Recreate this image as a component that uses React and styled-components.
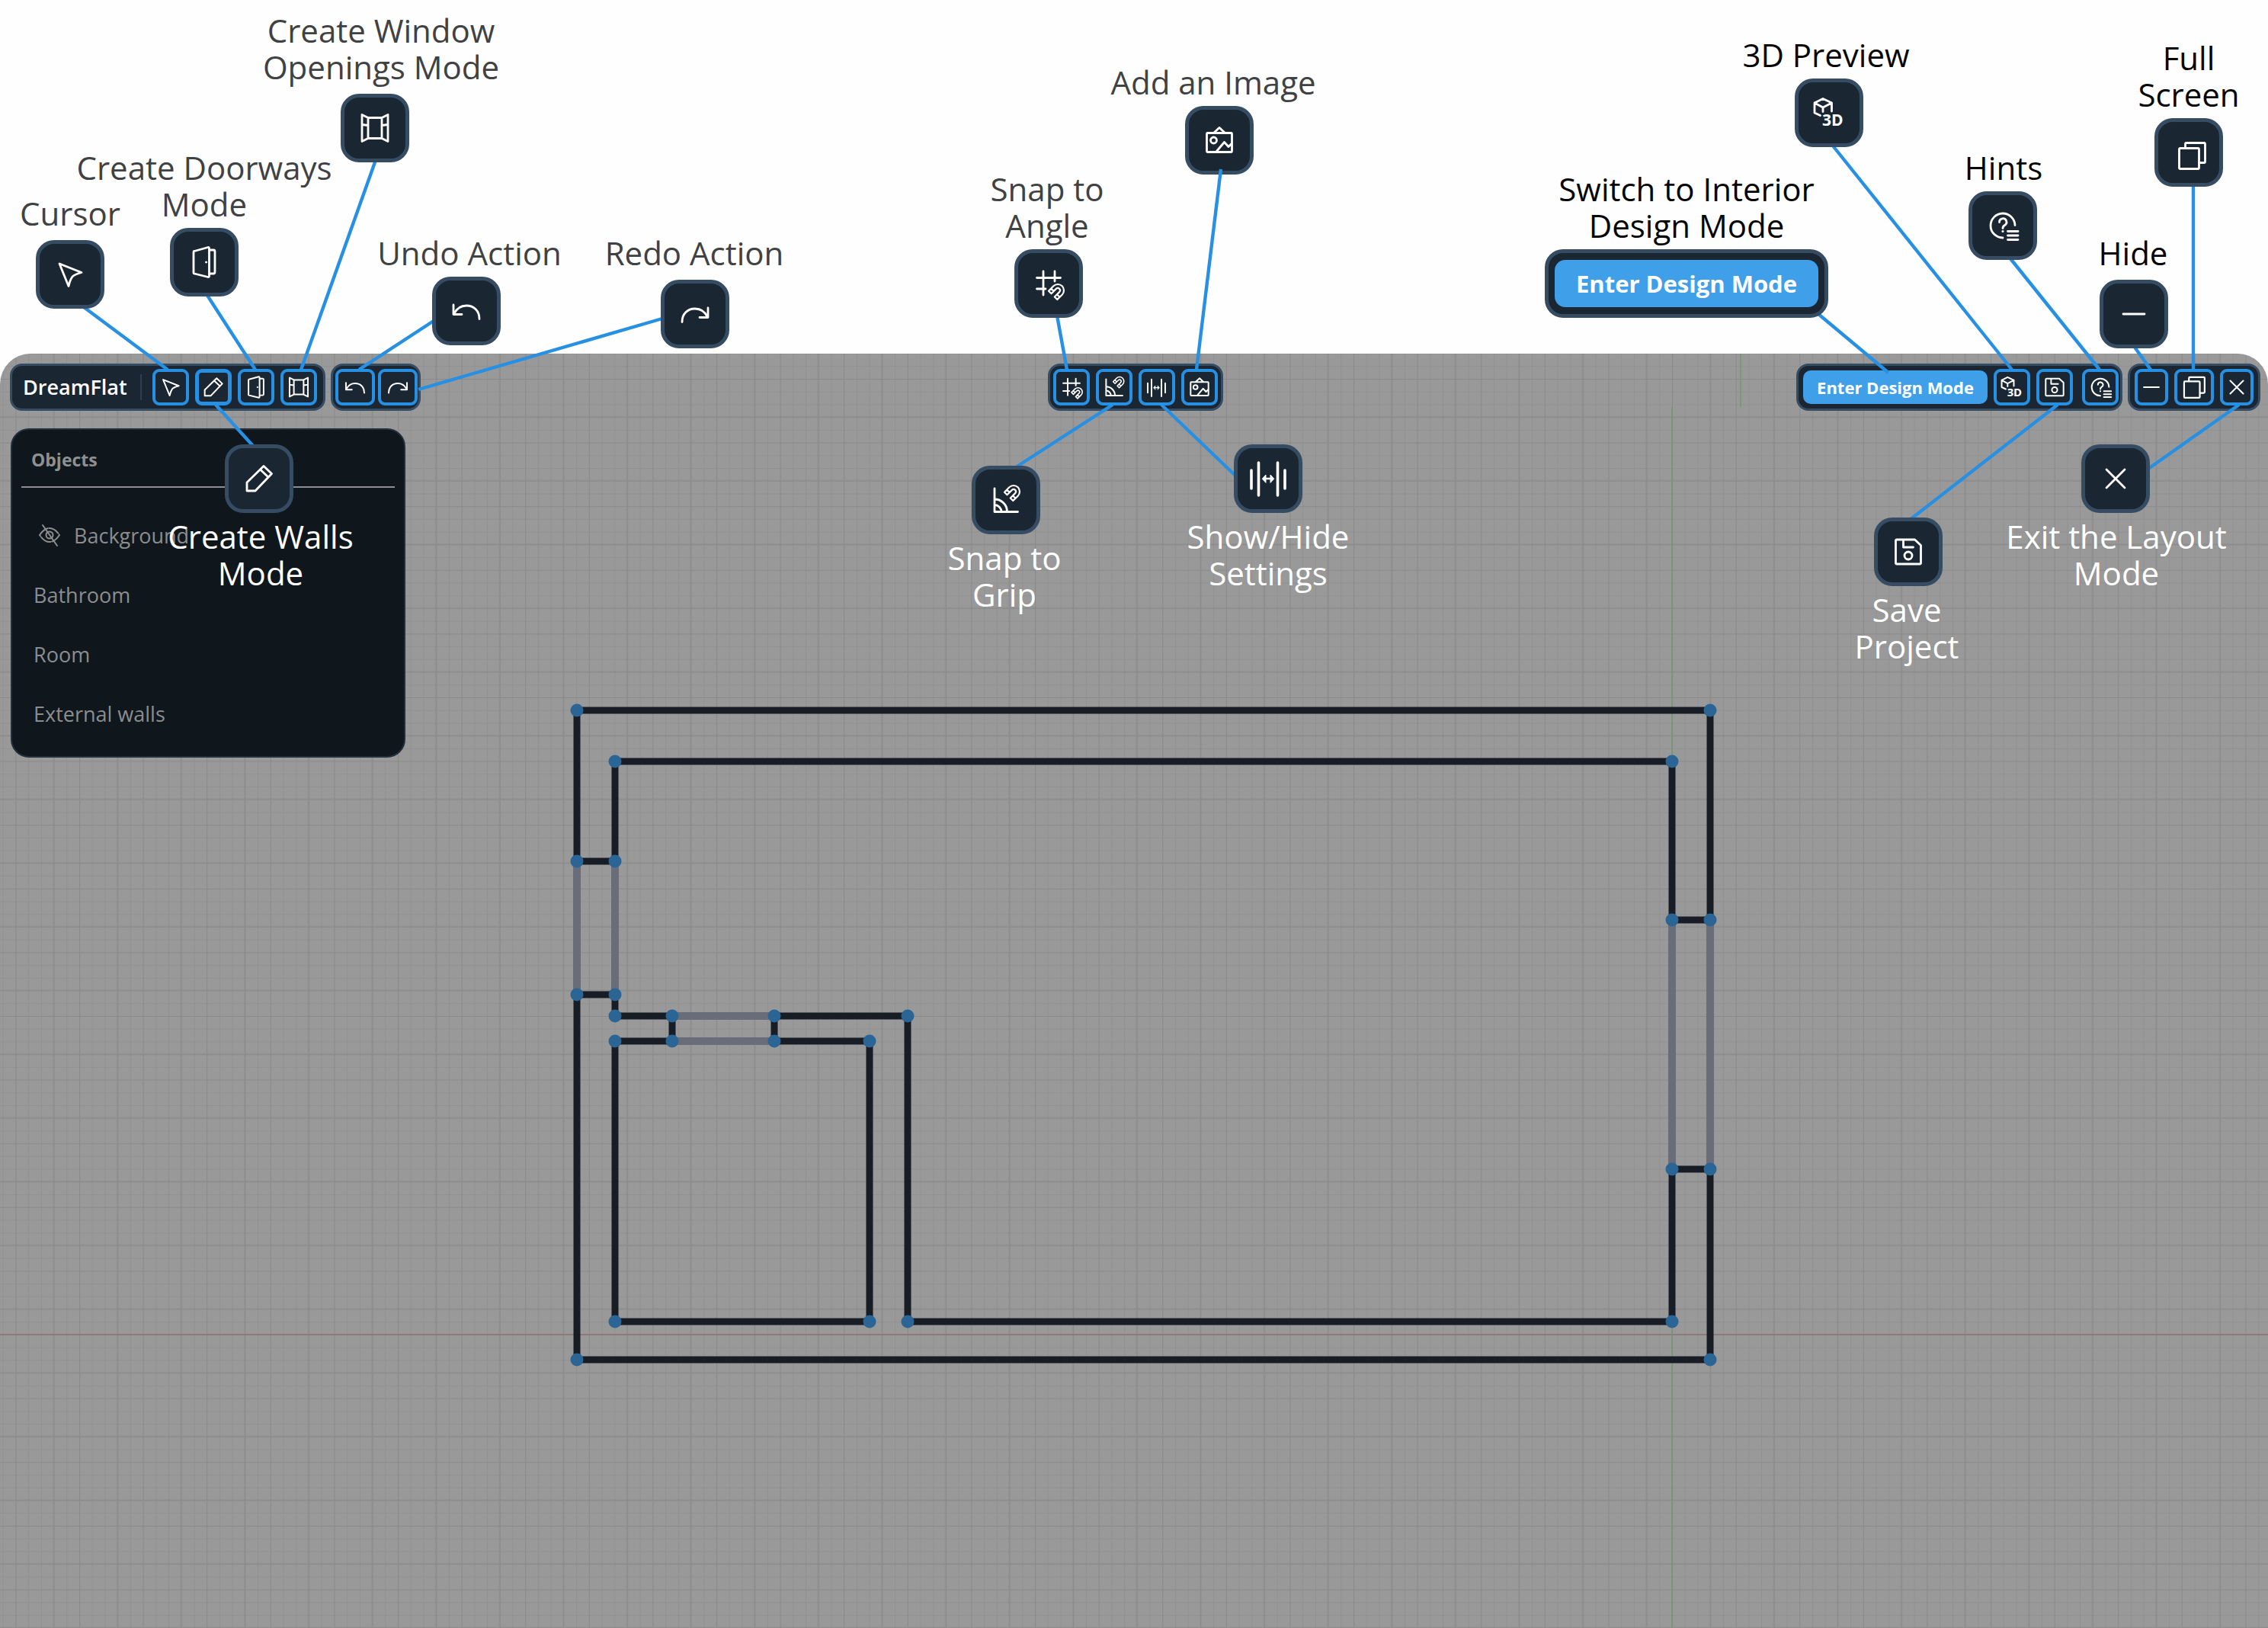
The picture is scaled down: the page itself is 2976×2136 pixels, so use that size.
import React from "react";
import styled, { createGlobalStyle } from "styled-components";

const GlobalStyle = createGlobalStyle`
  *, *::before, *::after { box-sizing: border-box; }
  body {
    margin: 0;
    background: #fefefe;
    font-family: "Open Sans", "Noto Sans", sans-serif;
  }
  button { font: inherit; cursor: pointer; }
`;

const color = {
  blue: "#2790e3",
  button: "#3f9fe9",
  bar: "#1a2733",
  border: "#364c63",
  panel: "#0f171d",
};

/* ---------- icons, drawn on a 48 unit square ---------- */

const Magnet = ({ x, y }) => (
  <g transform={`translate(${x} ${y}) rotate(45)`} strokeWidth="2.2">
    <path d="M-8 9V0A8 8 0 0 1 8 0V9H3V0A3 3 0 0 0-3 0V9ZM-8 4.5H-3M3 4.5H8" />
  </g>
);

const ICONS = {
  cursor: { art: <path d="M10 10 39 21.5Q30 24 27 27Q24 31 22 39.500Z" /> },
  pencil: { art: <path d="M30 7.500 40.500 17.500 19 40H8V29ZM25.500 12 36 22" /> },
  door: {
    art: (
      <>
        <path d="M11 9.500 29 4.500Q30.500 4.500 30.500 6V42Q30.500 43.500 29 43.500L11 39Q10 39 10 38V11Q10 9.500 11 9.500Z" />
        <path d="M31 8H36Q38 8 38 10V37Q38 39 36 39H31" />
        <circle cx="26.500" cy="24" r="1" fill="currentColor" strokeWidth="1" />
      </>
    ),
  },
  window: {
    art: (
      <path d="M15 10.500H33V37.500H15ZM15 10.500 7 6.500V41.500L15 37.500M33 10.500 41 6.500V41.500L33 37.500M7 19.500 15 20.500M33 20.500 41 19.500" />
    ),
  },
  undo: { art: <path d="M7 16V28.500H18M7.500 28C11 21 17 17 24 17C34 17 41 24 41 34.500" /> },
  redo: { art: <path d="M41 16V28.500H30M40.500 28C37 21 31 17 24 17C14 17 7 24 7 34.500" /> },
  angle: {
    art: (
      <>
        <path d="M17 8V39M32 8V21M8.500 16.500H39.500M8.500 31H20" />
        <Magnet x={36} y={33} />
      </>
    ),
  },
  grip: {
    art: (
      <>
        <path d="M9 9V39.500H39.500M9 23A16.500 16.500 0 0 1 25.500 39.500M9 30.500A9 9 0 0 1 18 39.500" />
        <Magnet x={34} y={13} />
      </>
    ),
  },
  settings: {
    barSize: 25,
    art: (
      <>
        <path strokeWidth="3.600" d="M2 13V37M11.500 3V46M36.500 3V46M46 13V37" />
        <path strokeWidth="2.400" d="M18 24H30" />
        <path fill="currentColor" strokeWidth="1" d="M16.500 24 21 19V29ZM31.500 24 27 19V29Z" />
      </>
    ),
  },
  image: {
    art: (
      <>
        <rect x="7.500" y="14.500" width="33" height="25" rx="1" />
        <path d="M17 14 24 7.500 31 14M20 39 30.500 26.500 36 32.500 40 28.500" />
        <circle cx="16.500" cy="24" r="4" />
      </>
    ),
  },
  preview: {
    art: (
      <>
        <path d="M12.500 27.500 5 24V11L16 5.500 27.500 11V22M5 11 16 17 27.500 11M16 17V22.500" />
        <text x="15" y="41" fontSize="21" fontWeight="700" fill="currentColor" stroke="none">
          3D
        </text>
      </>
    ),
  },
  save: {
    art: (
      <>
        <path d="M9 8H32.500L40.500 15.500V38.500Q40.500 40 39 40H9Q7.500 40 7.500 38.500V9.500Q7.500 8 9 8ZM17.500 8V18H30.500" />
        <circle cx="24" cy="29" r="5" />
      </>
    ),
  },
  hints: {
    art: (
      <>
        <path d="M24 40A16 16 0 1 1 40 23.500" />
        <path d="M30.500 31.500H44M30.500 37H44M30.500 42.500H44" />
        <path d="M19.500 19.500A4.700 4.700 0 1 1 26.500 23.500Q24 25 24 27.500" />
        <circle cx="24" cy="31.500" r="0.800" fill="currentColor" strokeWidth="1.500" />
      </>
    ),
  },
  hide: { art: <path d="M10 24H38" /> },
  full: {
    barSize: 38,
    barBox: "4 4 48 48",
    art: (
      <>
        <rect x="11.500" y="18.500" width="26" height="27" rx="1.500" />
        <path d="M19.500 18V13Q19.500 11.500 21 11.500H44Q45.500 11.500 45.500 13V36Q45.500 37.500 44 37.500H38" />
      </>
    ),
  },
  close: { art: <path d="M12 12 36 36M36 12 12 36" /> },
};

const Glyph = styled.svg`
  display: block;
  flex: none;
  width: ${(p) => p.$size}px;
  height: ${(p) => p.$size}px;
  overflow: visible;
  color: #ffffff;
  fill: none;
  stroke: currentColor;
  stroke-width: 2.8;
  stroke-linecap: round;
  stroke-linejoin: round;
`;

function Icon({ name, inBar }) {
  const { art, barSize = 34, barBox } = ICONS[name];
  return (
    <Glyph
      viewBox={(inBar && barBox) || "0 0 48 48"}
      $size={inBar ? barSize : 48}
      aria-hidden="true"
    >
      {art}
    </Glyph>
  );
}

/* ---------- page and workspace ---------- */

const Page = styled.main`
  position: relative;
  display: flex;
  flex-direction: column;
  min-height: 100vh;
  padding-top: 464px;
  overflow: hidden;
`;

const Workspace = styled.section`
  position: relative;
  flex: 1;
  border-radius: 40px 40px 0 0;
  background: #999999;
  overflow: hidden;
`;

const Canvas = styled.svg`
  position: absolute;
  inset: 0;
  width: 100%;
  height: 100%;
`;

const Content = styled.div`
  position: relative;
`;

/* ---------- toolbars ---------- */

const TopBar = styled.header`
  display: grid;
  grid-template-columns: 1fr auto 1fr;
  padding: 13px 10px 0 13px;
`;

const BarGroup = styled.div`
  display: flex;
  gap: 7px;
  justify-content: ${(p) => p.$align || "flex-start"};
`;

const Bar = styled.div`
  display: flex;
  align-items: center;
  gap: ${(p) => p.$gap ?? 8}px;
  padding: 4px ${(p) => p.$right ?? 4}px 4px ${(p) => p.$left ?? 4}px;
  border: 3px solid ${color.border};
  border-radius: 16px;
  background: ${color.bar};
`;

const BarSet = styled.div`
  display: flex;
  align-items: center;
  gap: 8px;
`;

const Brand = styled.strong`
  width: 156px;
  margin-right: 6px;
  border-right: 2px solid #2c3e50;
  color: #ffffff;
  font-size: 27px;
  font-weight: 600;
  line-height: 34px;
`;

const ToolButton = styled.button`
  display: flex;
  align-items: center;
  justify-content: center;
  width: ${(p) => p.$width || 48}px;
  height: 48px;
  padding: 0;
  border: ${(p) => (p.$active ? 5 : 4)}px solid ${color.blue};
  border-radius: 9px;
  background: transparent;
`;

const ModeButton = styled.button`
  width: ${(p) => (p.$large ? 346 : 242)}px;
  height: ${(p) => (p.$large ? 62 : 44)}px;
  padding: 0;
  border: 0;
  border-radius: ${(p) => (p.$large ? 14 : 10)}px;
  background: ${color.button};
  color: #ffffff;
  font-size: ${(p) => (p.$large ? 31 : 22)}px;
  font-weight: 700;
  white-space: nowrap;
`;

function Tool({ icon, label, width, active }) {
  return (
    <ToolButton type="button" aria-label={label} $width={width} $active={active}>
      <Icon name={icon} inBar />
    </ToolButton>
  );
}

/* ---------- objects panel ---------- */

const Panel = styled.aside`
  width: 518px;
  margin: 23px 0 0 14px;
  padding: 0 12px 17px;
  border: 2px solid #222f3c;
  border-radius: 24px;
  background: ${color.panel};
`;

const PanelTitle = styled.h2`
  display: flex;
  align-items: center;
  height: 76px;
  margin: 0 0 23px;
  padding: 4px 13px 0;
  border-bottom: 2px solid #8b8f93;
  color: #8f9091;
  font-size: 23px;
  font-weight: 700;
`;

const ObjectList = styled.ul`
  margin: 0;
  padding: 0 16px;
  list-style: none;
`;

const ObjectRow = styled.li`
  display: flex;
  align-items: center;
  gap: 15px;
  height: 78px;
  padding-left: ${(p) => (p.$nested ? 4 : 0)}px;
  color: #8c8d8e;
  font-size: 27px;
`;

const EyeButton = styled.button`
  display: flex;
  padding: 0;
  border: 0;
  background: transparent;
  color: inherit;
`;

const EyeGlyph = styled.svg`
  width: 34px;
  height: 34px;
  fill: none;
  stroke: currentColor;
  stroke-width: 2;
  stroke-linecap: round;
`;

/* ---------- call-outs ---------- */

const Zone = styled.div`
  position: absolute;
  top: 0;
  left: ${(p) => p.$anchor};
  width: 0;
`;

const Lines = styled.svg`
  position: absolute;
  top: 0;
  left: 0;
  width: 1px;
  height: 1px;
  overflow: visible;
  pointer-events: none;
  stroke: ${color.blue};
  stroke-width: 4.4;
`;

const Tile = styled.div`
  position: absolute;
  left: ${(p) => p.$x - (p.$wide ? 186 : 45)}px;
  top: ${(p) => p.$y}px;
  display: flex;
  align-items: center;
  justify-content: center;
  width: ${(p) => (p.$wide ? 372 : 90)}px;
  height: 90px;
  border: 5px solid ${color.border};
  border-radius: 24px;
  background: ${color.bar};
`;

const Pin = styled.div`
  position: absolute;
  left: ${(p) => p.$x}px;
  top: ${(p) => p.$y}px;
  display: flex;
  justify-content: center;
  width: 0;
`;

const Label = styled.p`
  flex: none;
  margin: 0;
  color: ${(p) => p.$tone};
  font-size: 42px;
  font-weight: 400;
  line-height: 48px;
  text-align: center;
  white-space: pre;
`;

const gray = "#404143";
const black = "#050505";
const white = "#ffffff";

const ZONES = [
  {
    anchor: "0px",
    lines: [
      [110, 403, 220, 485],
      [271, 386, 335, 485],
      [493, 210, 395, 485],
      [569, 421, 471, 485],
      [869, 418, 549, 511],
      [283, 531, 332, 585],
    ],
    notes: [
      { icon: "cursor", x: 92, y: 315, text: "Cursor", tx: 92, ty: 256, tone: gray },
      { icon: "door", x: 268, y: 299, text: "Create Doorways\nMode", tx: 268, ty: 196, tone: gray },
      { icon: "window", x: 492, y: 123, text: "Create Window\nOpenings Mode", tx: 500, ty: 16, tone: gray },
      { icon: "undo", x: 612, y: 363, text: "Undo Action", tx: 616, ty: 308, tone: gray },
      { icon: "redo", x: 912, y: 367, text: "Redo Action", tx: 911, ty: 308, tone: gray },
      { icon: "pencil", x: 340, y: 583, text: "Create Walls\nMode", tx: 342, ty: 680, tone: white },
    ],
  },
  {
    anchor: "50%",
    lines: [
      [-101, 414, -88, 485],
      [-28, 531, -155, 613],
      [36, 531, 133, 624],
    ],
    topLines: [[114, 222, 82, 485]],
    notes: [
      { icon: "angle", x: -112, y: 327, text: "Snap to\nAngle", tx: -114, ty: 224, tone: gray },
      { icon: "image", x: 112, y: 139, text: "Add an Image", tx: 104, ty: 84, tone: gray },
      { icon: "grip", x: -168, y: 611, text: "Snap to\nGrip", tx: -170, ty: 708, tone: white },
      { icon: "settings", x: 176, y: 583, text: "Show/Hide\nSettings", tx: 176, ty: 680, tone: white },
    ],
  },
  {
    anchor: "100%",
    lines: [
      [-590, 412, -498, 489],
      [-572, 190, -336, 485],
      [-339, 338, -221, 485],
      [-176, 454, -154, 485],
      [-98, 242, -98, 485],
      [-276, 531, -470, 682],
      [-38, 531, -157, 615],
    ],
    notes: [
      { wide: true, x: -763, y: 327, text: "Switch to Interior\nDesign Mode", tx: -763, ty: 224, tone: black },
      { icon: "preview", x: -576, y: 103, text: "3D Preview", tx: -580, ty: 48, tone: black },
      { icon: "hints", x: -348, y: 251, text: "Hints", tx: -347, ty: 196, tone: black },
      { icon: "full", x: -104, y: 155, text: "Full\nScreen", tx: -104, ty: 52, tone: black },
      { icon: "hide", x: -176, y: 367, text: "Hide", tx: -177, ty: 308, tone: black },
      { icon: "save", x: -472, y: 679, text: "Save\nProject", tx: -474, ty: 776, tone: white },
      { icon: "close", x: -200, y: 583, text: "Exit the Layout\nMode", tx: -199, ty: 680, tone: white },
    ],
  },
];

function LineLayer({ items }) {
  return (
    <Lines aria-hidden="true">
      {items.map(([x1, y1, x2, y2]) => (
        <line key={`${x1},${y1}`} x1={x1} y1={y1} x2={x2} y2={y2} />
      ))}
    </Lines>
  );
}

function CallOuts({ anchor, lines, topLines, notes }) {
  return (
    <Zone $anchor={anchor}>
      <LineLayer items={lines} />
      {notes.map((n) => (
        <React.Fragment key={n.text}>
          <Tile $x={n.x} $y={n.y} $wide={n.wide}>
            {n.wide ? (
              <ModeButton type="button" $large>
                Enter Design Mode
              </ModeButton>
            ) : (
              <Icon name={n.icon} />
            )}
          </Tile>
          <Pin $x={n.tx} $y={n.ty}>
            <Label $tone={n.tone}>{n.text}</Label>
          </Pin>
        </React.Fragment>
      ))}
      {topLines && <LineLayer items={topLines} />}
    </Zone>
  );
}

/* ---------- floor plan; x runs from the middle of the canvas ---------- */

const WALLS =
  "M-731 666V468H756V743M756 1070V1320H-731V841" +
  "M-681 666V535H706V743M706 1070V1270H-297V869H-472M-606 869H-681V841" +
  "M-472 902H-347V1270H-681V902H-606" +
  "M-731 666H-681M-731 841H-681M706 743H756M706 1070H756M-606 869V902M-472 869V902";

const OPENINGS = "M-731 666V841M-681 666V841M706 743V1070M756 743V1070M-606 869H-472M-606 902H-472";

const NODES = [
  [-731, 468], [756, 468], [-681, 535], [706, 535],
  [-731, 666], [-681, 666], [-731, 841], [-681, 841],
  [706, 743], [756, 743], [706, 1070], [756, 1070],
  [-681, 869], [-606, 869], [-472, 869], [-297, 869],
  [-681, 902], [-606, 902], [-472, 902], [-347, 902],
  [-681, 1270], [-347, 1270], [-297, 1270], [706, 1270],
  [-731, 1320], [756, 1320],
];

function FloorPlan() {
  return (
    <Canvas aria-label="Floor plan" role="img">
      <defs>
        <pattern id="minor" x="706" y="1287" width="16.72" height="16.72" patternUnits="userSpaceOnUse">
          <path d="M0 0H16.720M0 0V16.720" stroke="#000" strokeOpacity="0.05" strokeWidth="2" fill="none" />
        </pattern>
        <pattern id="major" x="706" y="1287" width="83.6" height="83.6" patternUnits="userSpaceOnUse">
          <path d="M0 0H83.600M0 0V83.600M50 0V83.600M0 50H83.600" stroke="#000" strokeOpacity="0.05" strokeWidth="2" fill="none" />
        </pattern>
      </defs>
      <svg x="50%" overflow="visible">
        <rect x="-3000" width="6000" height="3000" fill="url(#minor)" />
        <rect x="-3000" width="6000" height="3000" fill="url(#major)" />
        <path d="M-3000 1287H3000" stroke="#8d6b6d" strokeOpacity="0.6" strokeWidth="2" />
        <path d="M796 0V70M706 70V3000" stroke="#6f9a6a" strokeOpacity="0.7" strokeWidth="2" />
        <g fill="none">
          <path d={WALLS} stroke="#171c25" strokeWidth="9" />
          <path d={OPENINGS} stroke="#696d79" strokeWidth="10" />
        </g>
        {NODES.map(([x, y]) => (
          <circle key={`${x},${y}`} cx={x} cy={y} r="8.500" fill="#2b6595" />
        ))}
      </svg>
    </Canvas>
  );
}

export default function App() {
  return (
    <>
      <GlobalStyle />
      <Page>
        <Workspace>
          <FloorPlan />
          <Content>
            <TopBar>
              <BarGroup>
                <Bar $left={14} $right={8}>
                  <Brand>DreamFlat</Brand>
                  <Tool icon="cursor" label="Cursor" />
                  <Tool icon="pencil" label="Create walls" active />
                  <Tool icon="door" label="Create doorways" />
                  <Tool icon="window" label="Create window openings" />
                </Bar>
                <Bar $gap={4} $left={3} $right={1}>
                  <Tool icon="undo" label="Undo" width={52} />
                  <Tool icon="redo" label="Redo" width={52} />
                </Bar>
              </BarGroup>
              <Bar>
                <Tool icon="angle" label="Snap to angle" />
                <Tool icon="grip" label="Snap to grip" />
                <Tool icon="settings" label="Show or hide settings" />
                <Tool icon="image" label="Add an image" />
              </Bar>
              <BarGroup $align="flex-end">
                <Bar $gap={12} $left={6} $right={2}>
                  <BarSet>
                    <ModeButton type="button">Enter Design Mode</ModeButton>
                    <Tool icon="preview" label="3D preview" />
                    <Tool icon="save" label="Save project" />
                  </BarSet>
                  <Tool icon="hints" label="Hints" />
                </Bar>
                <Bar $left={6} $right={6}>
                  <Tool icon="hide" label="Hide" width={44} />
                  <Tool icon="full" label="Full screen" width={52} />
                  <Tool icon="close" label="Exit" width={44} />
                </Bar>
              </BarGroup>
            </TopBar>
            <Panel>
              <PanelTitle>Objects</PanelTitle>
              <ObjectList>
                <ObjectRow $nested>
                  <EyeButton type="button" aria-label="Show background">
                    <EyeGlyph viewBox="0 0 34 34" aria-hidden="true">
                      <path d="M4 17Q10 8 17 8T30 17Q24 26 17 26T4 17Z" strokeDasharray="14 2" />
                      <circle cx="17" cy="17" r="4.500" />
                      <path d="M8 4 27 31" />
                    </EyeGlyph>
                  </EyeButton>
                  Background
                </ObjectRow>
                <ObjectRow>Bathroom</ObjectRow>
                <ObjectRow>Room</ObjectRow>
                <ObjectRow>External walls</ObjectRow>
              </ObjectList>
            </Panel>
          </Content>
        </Workspace>
        {ZONES.map((zone) => (
          <CallOuts key={zone.anchor} {...zone} />
        ))}
      </Page>
    </>
  );
}
